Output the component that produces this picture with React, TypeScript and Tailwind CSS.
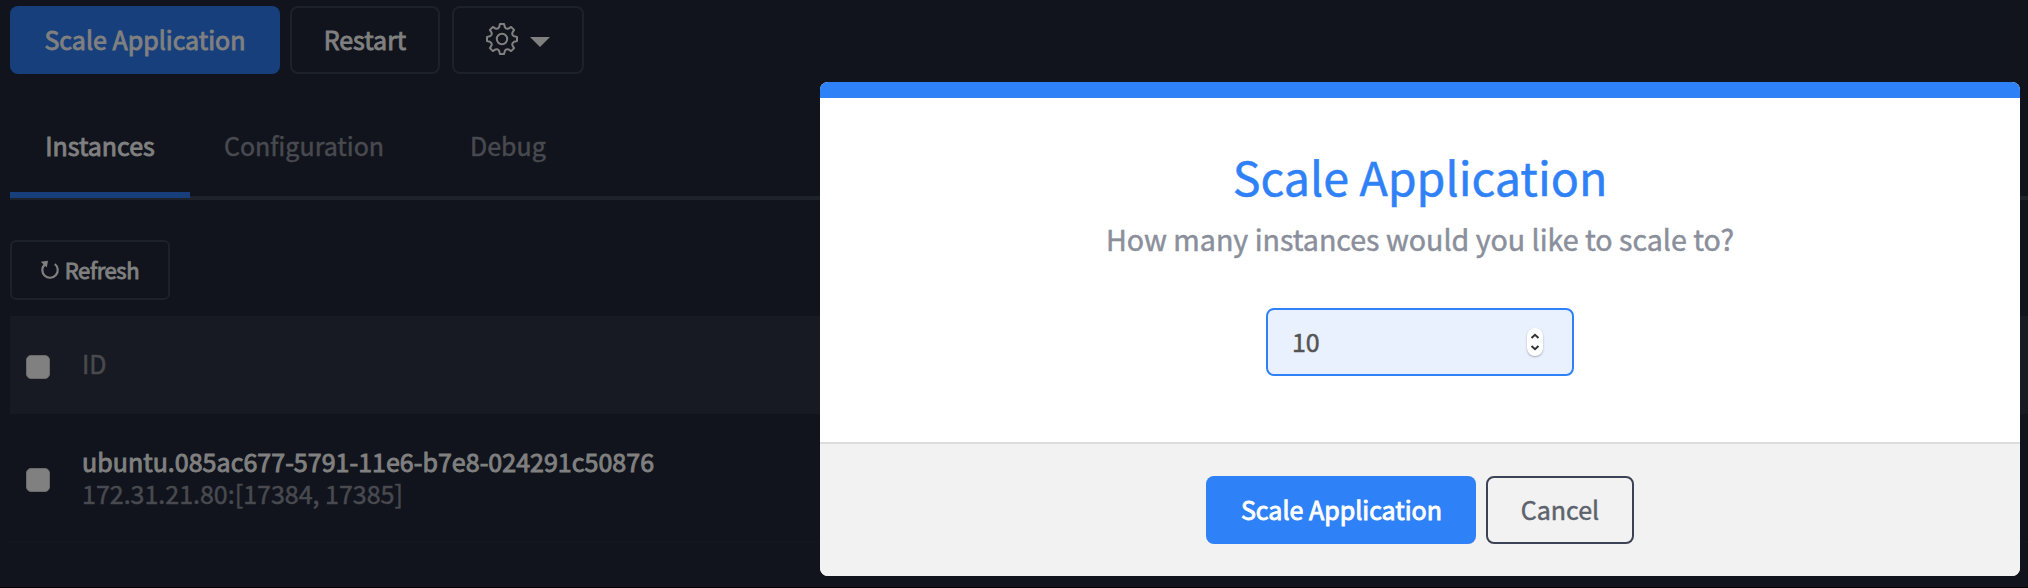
import type { ReactNode } from "react";

const STRONG = "[-webkit-text-stroke:0.9px_currentColor]";
const SOFT = "[-webkit-text-stroke:0.5px_currentColor]";

function gearPath() {
  const tooth = [[-2.8, -12], [-2.1, -15], [2.1, -15], [2.8, -12]];
  const rot = (x: number, y: number, a: number) => {
    const r = (a * Math.PI) / 180;
    return `${(16 + x * Math.cos(r) - y * Math.sin(r)).toFixed(2)} ${(16 + x * Math.sin(r) + y * Math.cos(r)).toFixed(2)}`;
  };
  let d = `M${rot(-2.8, -12, 0)}`;
  for (let i = 0; i < 8; i++) {
    const a = i * 45;
    d += tooth.slice(1).map(([x, y]) => `L${rot(x, y, a)}`).join("");
    d += `Q${rot(0, -10.4, a + 22.5)} ${rot(-2.8, -12, a + 45)}`;
  }
  return d + "Z";
}

function GearIcon() {
  return (
    <svg className="size-8" viewBox="0 0 32 32" fill="none" stroke="currentColor" strokeWidth="2" strokeLinejoin="round">
      <path d={gearPath()} />
      <circle cx="16" cy="16" r="5.2" />
    </svg>
  );
}

function RefreshIcon() {
  return (
    <svg className="h-5 w-5 shrink-0" viewBox="0 0 20 20" fill="none">
      <path d="M4.6 4.6A7.7 7.7 0 1 0 14.8 4" stroke="currentColor" strokeWidth="2.2" />
      <path d="M0.8 1.8L8 0.8L6.8 7.4Z" fill="currentColor" />
    </svg>
  );
}

function Button({ className, children }: { className: string; children: ReactNode }) {
  return (
    <button className={`flex h-[68px] shrink-0 items-center justify-center rounded-lg pb-0.5 ${className}`}>
      {children}
    </button>
  );
}

function Checkbox() {
  return <span className="block size-6 shrink-0 rounded-[5px] border border-[#6b6b6b] bg-[#808080]" />;
}

function Modal() {
  return (
    <div className="absolute top-[82px] left-[820px] flex h-[494px] w-[1200px] flex-col overflow-hidden rounded-lg bg-white">
      <div className="h-4 shrink-0 bg-[#2f81f7]" />
      <div className="flex h-[344px] shrink-0 flex-col items-center">
        <h2 className={`mt-[50px] text-[46.6px] leading-[56px] text-[#2f81f7] ${SOFT}`}>Scale Application</h2>
        <p className={`mt-[19px] text-[28.6px] leading-[32px] text-[#8a8f9b] ${SOFT}`}>
          How many instances would you like to scale to?
        </p>
        <div className="mt-[53px] flex h-[68px] w-[308px] items-center justify-between rounded-lg border-2 border-[#2f81f7] bg-[#eaf1fe] pr-[29px] pl-6">
          <span className={`pb-[3px] tracking-[-0.2px] text-[#545454] ${SOFT}`}>10</span>
          <svg className="h-7 w-4 rounded-full bg-white shadow-[0_1px_2px_0px_rgba(0,0,0,0.3)]" viewBox="0 0 16 28" fill="none" stroke="#333" strokeWidth="2">
            <path d="M4.5 10L8 6.8L11.5 10M4.5 18L8 21.2L11.5 18" />
          </svg>
        </div>
      </div>
      <div className="flex flex-1 justify-center gap-2.5 border-t-2 border-[#dcdcdc] bg-[#f2f2f2] pt-8">
        <Button className={`w-[270px] bg-[#2f81f7] pl-px text-white ${STRONG}`}>Scale Application</Button>
        <Button className={`w-[148px] border-2 border-[#3c4356] text-[#5d636e] ${SOFT}`}>Cancel</Button>
      </div>
    </div>
  );
}

export default function App() {
  return (
    <div className="relative h-[588px] w-[2028px] overflow-hidden border-b border-black bg-[#11141c] pt-1.5 pl-2.5 font-['Noto_Sans_CJK_SC','Noto_Sans',sans-serif] text-[25px] leading-8 text-[#808080]">
      <div className="flex">
        <Button className={`w-[270px] bg-[#173f7b] ${STRONG}`}>Scale Application</Button>
        <Button className={`ml-2.5 w-[150px] border-2 border-[#1d2129] ${STRONG}`}>Restart</Button>
        <Button className="ml-3 w-[132px] gap-3 border-2 border-[#1d2129]">
          <GearIcon />
          <svg className="mt-1.5 h-2.5 w-5" viewBox="0 0 20 10" fill="currentColor">
            <path d="M0 0H20L10 10Z" />
          </svg>
        </Button>
      </div>

      <div className="mt-9 flex h-[90px] border-b-4 border-[#1e222a] text-[#484a50]">
        <div className={`-mb-0.5 flex h-[88px] w-[180px] justify-center border-b-[6px] border-[#173f7b] pt-[19px] text-[#808080] ${STRONG}`}>
          Instances
        </div>
        <div className={`ml-[34px] pt-[19px] ${SOFT}`}>Configuration</div>
        <div className={`ml-[86px] pt-[19px] ${SOFT}`}>Debug</div>
      </div>

      <button className={`mt-10 flex h-[60px] w-40 items-center justify-center rounded-md border-2 border-[#1d2129] pr-px text-[22px] tracking-[-0.4px] ${STRONG}`}>
        <RefreshIcon />
        <span className="ml-[5px] pb-[3px]">Refresh</span>
      </button>

      <div className="mt-4 flex h-[98px] items-center bg-[#171a22] pl-4">
        <div className="pt-1"><Checkbox /></div>
        <div className={`ml-8 pb-1 text-[#484a50] ${SOFT}`}>ID</div>
      </div>
      <div className="flex h-[129px] items-center border-b-2 border-[#13161e] pl-4">
        <div className="pt-1"><Checkbox /></div>
        <div className="ml-8 pb-0.5">
          <div className={`tracking-[0.03px] ${STRONG}`}>ubuntu.085ac677-5791-11e6-b7e8-024291c50876</div>
          <div className={`text-[#484a50] ${SOFT}`}>172.31.21.80:[17384, 17385]</div>
        </div>
      </div>

      <Modal />
    </div>
  );
}
